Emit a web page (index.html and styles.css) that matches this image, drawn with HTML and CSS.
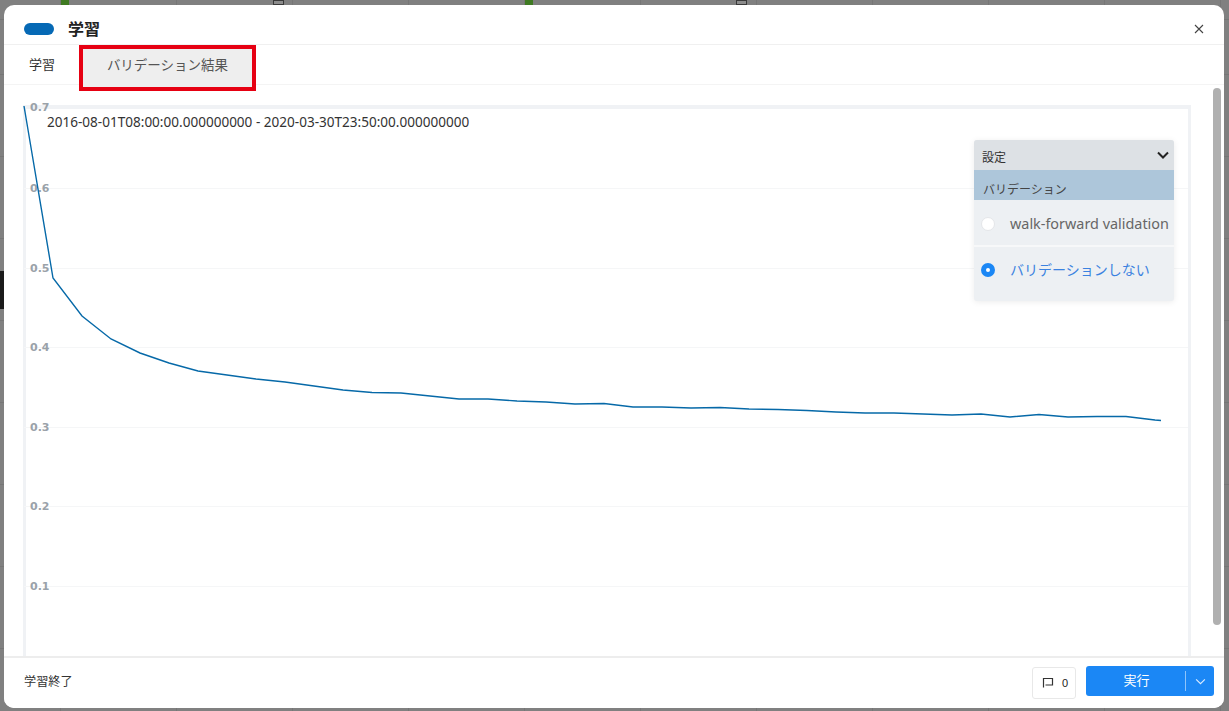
FILE: index.html
```html
<!DOCTYPE html>
<html lang="ja">
<head>
<meta charset="utf-8">
<title>学習</title>
<link rel="stylesheet" href="styles.css">
</head>
<body>
<div class="backdrop">
  <span class="bg-mark bg-mark-a"></span>
  <span class="bg-mark bg-mark-b"></span>
  <span class="bg-mark bg-mark-c"></span>
  <span class="bg-mark bg-mark-d"></span>
  <span class="bg-mark bg-mark-black"></span>
  <section class="modal">
    <header class="modal-head">
      <span class="pill"></span>
      <h1 class="title">学習</h1>
      <svg class="close" viewBox="0 0 10 10" width="10" height="10"><path d="M1 1 9 9M9 1 1 9"/></svg>
    </header>
    <nav class="tabs">
      <a class="tab">学習</a>
      <a class="tab tab-active">バリデーション結果</a>
    </nav>
    <main class="body">
      <div class="chart">
        <svg class="plot" viewBox="0 0 1168 552" width="1168" height="552">
          <g class="grid">
            <path d="M0 83.5H1164M0 163.5H1164M0 242.5H1164M0 322.5H1164M0 401.5H1164M0 481.5H1164"/>
          </g>
          <g class="ticks">
            <text x="6" y="6">0.7</text>
            <text x="6" y="87">0.6</text>
            <text x="6" y="167">0.5</text>
            <text x="6" y="246">0.4</text>
            <text x="6" y="326">0.3</text>
            <text x="6" y="405">0.2</text>
            <text x="6" y="485">0.1</text>
          </g>
          <polyline class="series" points="0,1 29,173 58,211 87,234 116,248 145,258 174,266 203,270 232,274 261,277 290,281 319,285 348,287.5 377,288 406,291 435,294 464,294 493,296 522,297 551,299 580,298.5 609,302 638,302 667,303 696,302.5 725,304 754,304.5 783,305.5 812,307 841,308 870,308 899,309 928,310 957,309 986,312 1015,309.5 1044,312 1073,311.5 1102,311.5 1131,315 1137,315.5"/>
        </svg>
        <div class="range">2016-08-01T08:00:00.000000000 - 2020-03-30T23:50:00.000000000</div>
        <aside class="settings">
          <div class="settings-head">
            <span class="settings-label">設定</span>
            <svg class="chev" viewBox="0 0 12 8" width="12" height="8"><path d="M1 1.5 6 6.5 11 1.5"/></svg>
          </div>
          <div class="settings-section">バリデーション</div>
          <div class="option">
            <span class="radio"></span>
            <span>walk-forward validation</span>
          </div>
          <div class="option option-on">
            <span class="radio radio-on"></span>
            <span>バリデーションしない</span>
          </div>
        </aside>
      </div>
      <div class="scrollbar"></div>
    </main>
    <footer class="modal-foot">
      <span class="status">学習終了</span>
      <button class="comment">
        <svg viewBox="0 0 12 12" width="12" height="12"><path d="M1.5 10.5V1.5H10.5V8H3.5"/></svg>
        <span>0</span>
      </button>
      <div class="run">
        <span class="run-main">実行</span>
        <span class="run-more">
          <svg viewBox="0 0 12 8" width="11" height="7"><path d="M1 1.5 6 6.5 11 1.5"/></svg>
        </span>
      </div>
    </footer>
  </section>
</div>
</body>
</html>
```
FILE: styles.css
```css
* { box-sizing: border-box; }
html, body { margin: 0; height: 100%; overflow: hidden; }
body {
  font-family: "Noto Sans", "Noto Sans CJK JP", sans-serif;
  color: #262626;
}
.backdrop {
  position: relative;
  width: 1229px;
  height: 711px;
  padding: 5px 5px 3px 4px;
  background-color: #808080;
  background-image:
    repeating-linear-gradient(to right, #767676 0 1px, transparent 1px 116px),
    repeating-linear-gradient(to bottom, #767676 0 1px, transparent 1px 82px);
  background-position: 60px 0, 0 74px;
}
.bg-mark { position: absolute; }
.bg-mark-a { left: 61px; top: 0; width: 8px; height: 5px; background: #3f7a22; }
.bg-mark-b { left: 525px; top: 0; width: 8px; height: 5px; background: #3f7a22; }
.bg-mark-c { left: 273px; top: 0; width: 11px; height: 5px; border: 1px solid #3a3a3a; background: #8c8c8c; }
.bg-mark-d { left: 736px; top: 0; width: 11px; height: 5px; border: 1px solid #3a3a3a; background: #8c8c8c; }
.bg-mark-black { left: 0; top: 271px; width: 4px; height: 38px; background: #1a1a1a; }
.modal {
  position: relative;
  display: flex;
  flex-direction: column;
  height: 703px;
  background: #fff;
  border-radius: 10px;
  overflow: hidden;
}
.modal-head {
  display: flex;
  align-items: center;
  height: 40px;
  padding: 8px 20px 0;
  border-bottom: 1px solid #f0f0f0;
  flex: none;
}
.pill { width: 30px; height: 12px; border-radius: 6px; background: #0669b5; }
.title { margin: 0 0 0 14px; font-size: 16px; line-height: 22px; font-weight: 700; color: #222; }
.close { margin-left: auto; fill: none; stroke: #444; stroke-width: 1.1; }
.tabs {
  display: flex;
  height: 40px;
  flex: none;
  border-bottom: 1px solid #f4f4f4;
}
.tab {
  display: flex;
  align-items: center;
  justify-content: center;
  font-size: 13px;
  color: #333;
}
.tab:first-child { width: 75px; padding-left: 1px; height: 38px; padding-bottom: 1px; }
.tab-active {
  width: 177px;
  height: 46px;
  border: 4px solid #e60012;
  background: #eeeeee;
  color: #555;
  font-size: 13.5px;
  padding-bottom: 9px;
}
.body {
  position: relative;
  flex: 1;
  min-height: 0;
  overflow: hidden;
}
.chart {
  position: absolute;
  left: 19px;
  top: 20px;
  width: 1168px;
  height: 552px;
  border-top: 4px solid #f0f2f5;
  border-left: 3px solid #f0f2f5;
  border-right: 3px solid #f0f2f5;
}
.plot { position: absolute; left: -2px; top: -4px; overflow: visible; }
.grid path { stroke: #f5f6f7; stroke-width: 1; fill: none; }
.ticks text { font-size: 11px; font-weight: 700; fill: #9aa2a9; font-family: "DejaVu Sans", sans-serif; }
.series { fill: none; stroke: #0669a8; stroke-width: 1.4; }
.range {
  position: absolute;
  left: 21px;
  top: 4px;
  font-size: 13.55px;
  line-height: 18px;
  white-space: nowrap;
  color: #333;
}
.settings {
  position: absolute;
  left: 948px;
  top: 31px;
  width: 200px;
  height: 161px;
  border-radius: 3px;
  background: #edf0f3;
  box-shadow: 0 1px 6px rgba(0,0,0,.08);
  overflow: hidden;
}
.settings-head {
  display: flex;
  align-items: center;
  justify-content: space-between;
  height: 30px;
  padding: 0 5px 0 8px;
  background: #dde1e5;
  font-size: 12px;
  color: #333;
}
.settings-label { padding-top: 3px; }
.chev { fill: none; stroke: #222; stroke-width: 2; }
.settings-section {
  height: 30px;
  padding: 11px 0 0 9px;
  background: #adc6da;
  font-size: 12px;
  line-height: 17px;
  color: #444;
}
.option {
  display: flex;
  align-items: center;
  gap: 15px;
  height: 45px;
  padding: 3px 0 0 7px;
  font-size: 14.4px;
  line-height: 18px;
  color: #666;
  white-space: nowrap;
}
.option + .option { border-top: 2px solid #f7f8f9; height: 47px; }
.option-on { color: #3b82e0; font-size: 14px; padding-top: 0; }
.radio {
  flex: none;
  width: 14px;
  height: 14px;
  border-radius: 50%;
  background: #fff;
  border: 1px solid #e4e6e9;
}
.radio-on { border: 5px solid #1b87f5; }
.scrollbar {
  position: absolute;
  right: 3px;
  top: 3px;
  width: 8px;
  height: 537px;
  border-radius: 4px;
  background: #b0b0b0;
}
.modal-foot {
  display: flex;
  align-items: flex-start;
  height: 52px;
  padding: 8px 10px 0 20px;
  flex: none;
  border-top: 2px solid #ededed;
  background: #fff;
  position: relative;
}
.status { font-size: 12.15px; line-height: 18px; margin-top: 7px; color: #333; margin-right: auto; }
.comment {
  display: flex;
  align-items: center;
  gap: 8px;
  width: 44px;
  height: 32px;
  padding: 0 0 0 9px;
  margin: 1px 10px 0 0;
  background: #fff;
  border: 1px solid #e8e8e8;
  border-radius: 3px;
  font: 11px "Liberation Sans", sans-serif;
  color: #222;
}
.comment svg { fill: none; stroke: #333; stroke-width: 1.2; }
.run {
  display: flex;
  width: 128px;
  height: 30px;
  border-radius: 3px;
  background: #1b87f5;
  color: #fff;
  font-size: 13px;
  line-height: 18px;
}
.run-main { flex: 1; display: flex; align-items: center; justify-content: center; padding: 0 0 2px 2px; }
.run-more {
  width: 29px;
  margin: 5px 0;
  display: flex;
  align-items: center;
  justify-content: center;
  border-left: 1px solid #8fc4fa;
}
.run-more svg { fill: none; stroke: #dcecff; stroke-width: 1.3; }
```
